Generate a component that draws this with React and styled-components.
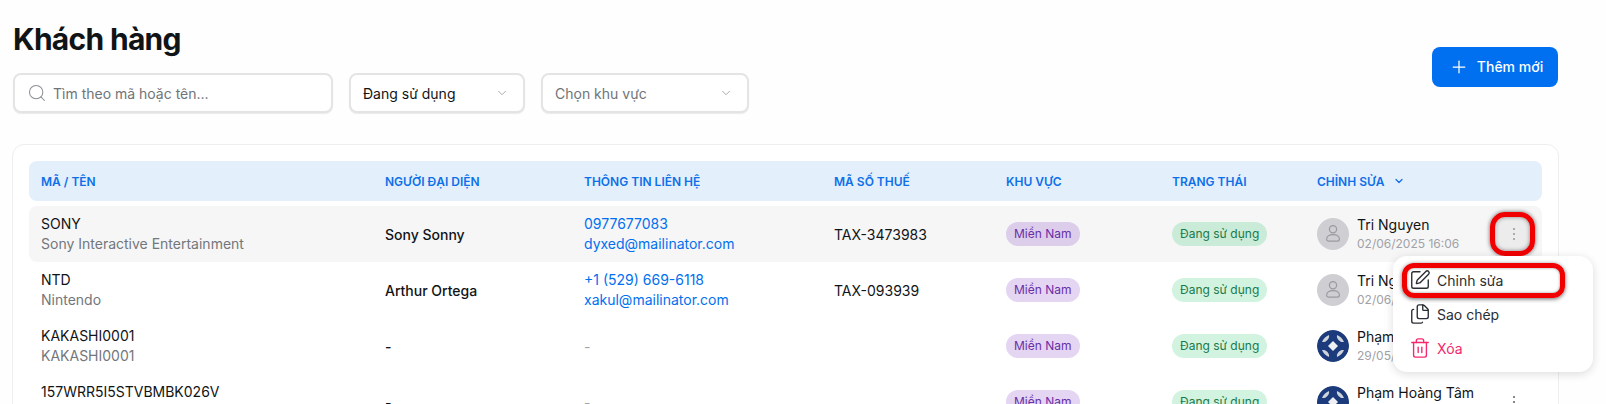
import styled, { createGlobalStyle } from 'styled-components';
import { ChevronDown, Files, Plus, Search, SquarePen, Trash2 } from 'lucide-react';

const GlobalStyle = createGlobalStyle`
	html, body {
		margin: 0;
		height: 100%;
		overflow: hidden;
		background: #fefefe;
		color: #111416;
		font-family: Inter, "Noto Sans", sans-serif;
		font-size: 14px;
	}
	*, *::before, *::after {
		box-sizing: border-box;
	}
`;

const Page = styled.div`
	width: 1559px;
	padding: 20px 0 0 12px;
`;

const TopBar = styled.div`
	display: flex;
	justify-content: space-between;
	align-items: center;
	padding-bottom: 31px;
`;

const TitleBlock = styled.div`
	display: flex;
	flex-direction: column;
	gap: 15px;
	padding-left: 1px;
`;

const Title = styled.h1`
	margin: 0;
	font-size: 30px;
	line-height: 38px;
	font-weight: 700;
	letter-spacing: -0.7px;
`;

const Filters = styled.div`
	display: flex;
	gap: 16px;
`;

const Field = styled.div`
	width: ${({ $width }) => $width}px;
	height: 40px;
	padding: 0 14px 0 12px;
	display: flex;
	align-items: center;
	gap: 6px;
	background: #fff;
	border: 2px solid #e4e4e4;
	border-radius: 8px;
	box-shadow: 0 1px 1px rgba(0, 0, 0, 0.08);
	color: ${({ $filled }) => ($filled ? '#111416' : '#6f7479')};
	svg {
		color: #8b8f94;
		flex-shrink: 0;
	}
`;

const FieldText = styled.span`
	flex: 1;
`;

const AddButton = styled.button`
	width: 126px;
	height: 40px;
	margin-right: 1px;
	padding: 0 0 0 2px;
	display: flex;
	justify-content: center;
	align-items: center;
	gap: 8px;
	background: #0070f0;
	border: 0;
	border-radius: 8px;
	color: #fff;
	font: 500 14px Inter, sans-serif;
`;

const Card = styled.div`
	position: relative;
	height: 400px;
	padding: 16px;
	background: #fff;
	border: 1px solid #eeeeee;
	border-radius: 12px;
`;

const Columns = styled.div`
	display: grid;
	grid-template-columns: 344px 199px 250px 172px 166px 145px 1fr;
	align-items: center;
	padding-left: 12px;
`;

const HeaderRow = styled(Columns)`
	height: 40px;
	margin-bottom: 5px;
	background: #e3effb;
	border-radius: 8px;
	color: #0f6fe8;
	font-size: 12px;
	font-weight: 600;
`;

const HeadSort = styled.span`
	display: flex;
	align-items: center;
	gap: 8px;
`;

const Row = styled(Columns)`
	height: 56px;
	border-radius: 8px;
	background: ${({ $active }) => ($active ? '#f6f6f6' : 'transparent')};
`;

const Stack = styled.div`
	display: flex;
	flex-direction: column;
	line-height: 20px;
`;

const Muted = styled.span`
	color: #73777c;
`;

const Person = styled.span`
	font-weight: 500;
`;

const Contact = styled.a`
	color: #0070f0;
`;

const Empty = styled.span`
	color: #a2a6ab;
`;

const Pill = styled.span`
	display: inline-block;
	height: 24px;
	padding: 0 8px;
	border-radius: 12px;
	font-size: 12px;
	line-height: 24px;
	background: ${({ $tone }) => ($tone === 'purple' ? 'rgba(119, 46, 189, 0.2)' : 'rgba(31, 196, 100, 0.2)')};
	color: ${({ $tone }) => ($tone === 'purple' ? '#6a2fa8' : '#1a7a4a')};
`;

const EditCell = styled.div`
	display: flex;
	align-items: center;
	padding-right: 11px;
`;

const Avatar = styled.div`
	width: 32px;
	height: 32px;
	margin-right: 8px;
	flex-shrink: 0;
	border-radius: 50%;
	background: #cfcfd3;
	display: flex;
	justify-content: center;
	align-items: center;
	overflow: hidden;
`;

const Editor = styled.div`
	flex: 1;
	display: flex;
	flex-direction: column;
	line-height: 19px;
`;

const EditDate = styled.span`
	color: #a0a2a8;
	font-size: 12px;
`;

const Kebab = styled.div`
	position: relative;
	width: 34px;
	height: 34px;
	display: flex;
	flex-direction: column;
	justify-content: center;
	align-items: center;
	gap: 3px;
	border-radius: 10px;
	color: ${({ $marked }) => ($marked ? '#a9adb0' : '#85898e')};
	background: ${({ $marked }) => ($marked ? '#ececec' : 'transparent')};
	${({ $marked }) => $marked && `
		&::after {
			content: '';
			position: absolute;
			inset: -5px -4px -5px -7px;
			border: 5px solid #f00000;
			border-radius: 15px;
			box-shadow: 0 0 4px rgba(0, 0, 0, 0.6), inset 0 0 4px rgba(0, 0, 0, 0.45);
		}
	`}
`;

const Dot = styled.i`
	width: 2px;
	height: 2px;
	background: currentColor;
`;

const Menu = styled.div`
	position: absolute;
	top: 111px;
	right: -35px;
	width: 200px;
	padding: 7px 10px;
	background: #fff;
	border-radius: 14px;
	box-shadow: 0 2px 10px rgba(0, 0, 0, 0.14);
`;

const MenuItem = styled.div`
	position: relative;
	height: 34px;
	padding-left: 6px;
	display: flex;
	align-items: center;
	gap: 6px;
	color: ${({ $danger }) => ($danger ? '#f5286e' : '#2a2e33')};
	${({ $marked }) => $marked && `
		&::after {
			content: '';
			position: absolute;
			top: 0;
			bottom: -1px;
			left: -1px;
			width: 163px;
			border: 5px solid #f00000;
			border-radius: 12px;
			box-shadow: 0 1px 4px rgba(0, 0, 0, 0.6), inset 0 0 3px rgba(0, 0, 0, 0.4);
		}
	`}
`;

const UserIcon = () => (
	<svg width="20" height="20" viewBox="0 0 20 20" fill="none" stroke="#9a9a9f" strokeWidth="1.2">
		<circle cx="10" cy="5.2" r="3.6" />
		<path d="M3.6 15.2c0-2.8 2.8-4.6 6.4-4.6s6.4 1.8 6.4 4.6c0 1.2-1 1.9-2.2 1.9H5.8c-1.2 0-2.2-.7-2.2-1.9z" />
	</svg>
);

const LogoIcon = () => (
	<svg width="32" height="32" viewBox="0 0 32 32">
		<circle cx="16" cy="16" r="16" fill="#1c3b7c" />
		<path d="M16 11l5 5-5 5-5-5z" fill="#eef0f4" />
		{[0, 90, 180, 270].map((angle) => (
			<path
				key={angle}
				d="M5 12C6.2 8.8 8.8 6.2 12 5C12.4 7 11.8 8.6 10.2 10.2C8.6 11.8 7 12.4 5 12Z"
				fill="#cfd3da"
				transform={`rotate(${angle} 16 16)`}
			/>
		))}
	</svg>
);

const customers = [
	{
		code: 'SONY',
		name: 'Sony Interactive Entertainment',
		person: 'Sony Sonny',
		phone: '0977677083',
		email: 'dyxed@mailinator.com',
		tax: 'TAX-3473983',
		editor: 'Tri Nguyen',
		date: '02/06/2025 16:06',
		logo: false,
	},
	{
		code: 'NTD',
		name: 'Nintendo',
		person: 'Arthur Ortega',
		phone: '+1 (529) 669-6118',
		email: 'xakul@mailinator.com',
		tax: 'TAX-093939',
		editor: 'Tri Nguyen',
		date: '02/06/2025 16:06',
		logo: false,
	},
	{
		code: 'KAKASHI0001',
		name: 'KAKASHI0001',
		person: '-',
		tax: '',
		editor: 'Phạm Hoàng Tâm',
		date: '29/05/2025 10:12',
		logo: true,
	},
	{
		code: '157WRR5I5STVBMBK026V',
		name: '157WRR5I5STVBMBK026V',
		person: '-',
		tax: '',
		editor: 'Phạm Hoàng Tâm',
		date: '29/05/2025 10:12',
		logo: true,
	},
];

export default function App() {
	return (
		<Page>
			<GlobalStyle />
			<TopBar>
				<TitleBlock>
					<Title>Khách hàng</Title>
					<Filters>
						<Field $width={320}>
							<Search size={20} strokeWidth={1.25} />
							<FieldText>Tìm theo mã hoặc tên...</FieldText>
						</Field>
						<Field $width={176} $filled>
							<FieldText>Đang sử dụng</FieldText>
							<ChevronDown size={14} strokeWidth={1.25} />
						</Field>
						<Field $width={208}>
							<FieldText>Chọn khu vực</FieldText>
							<ChevronDown size={14} strokeWidth={1.25} />
						</Field>
					</Filters>
				</TitleBlock>
				<AddButton>
					<Plus size={20} strokeWidth={1.5} />
					Thêm mới
				</AddButton>
			</TopBar>
			<Card>
				<HeaderRow>
					<span>MÃ / TÊN</span>
					<span>NGƯỜI ĐẠI DIỆN</span>
					<span>THÔNG TIN LIÊN HỆ</span>
					<span>MÃ SỐ THUẾ</span>
					<span>KHU VỰC</span>
					<span>TRẠNG THÁI</span>
					<HeadSort>
						CHỈNH SỬA
						<ChevronDown size={12} strokeWidth={2.5} />
					</HeadSort>
				</HeaderRow>
				{customers.map((customer, index) => (
					<Row key={customer.code} $active={index === 0}>
						<Stack>
							<span>{customer.code}</span>
							<Muted>{customer.name}</Muted>
						</Stack>
						<Person>{customer.person}</Person>
						{customer.phone ? (
							<Stack>
								<Contact>{customer.phone}</Contact>
								<Contact>{customer.email}</Contact>
							</Stack>
						) : (
							<Empty>-</Empty>
						)}
						<span>{customer.tax}</span>
						<div>
							<Pill $tone="purple">Miền Nam</Pill>
						</div>
						<div>
							<Pill $tone="green">Đang sử dụng</Pill>
						</div>
						<EditCell>
							<Avatar>{customer.logo ? <LogoIcon /> : <UserIcon />}</Avatar>
							<Editor>
								<span>{customer.editor}</span>
								<EditDate>{customer.date}</EditDate>
							</Editor>
							<Kebab $marked={index === 0}>
								<Dot />
								<Dot />
								<Dot />
							</Kebab>
						</EditCell>
					</Row>
				))}
				<Menu>
					<MenuItem $marked>
						<SquarePen size={22} strokeWidth={1.5} />
						Chỉnh sửa
					</MenuItem>
					<MenuItem>
						<Files size={22} strokeWidth={1.5} />
						Sao chép
					</MenuItem>
					<MenuItem $danger>
						<Trash2 size={22} strokeWidth={1.5} />
						Xóa
					</MenuItem>
				</Menu>
			</Card>
		</Page>
	);
}
